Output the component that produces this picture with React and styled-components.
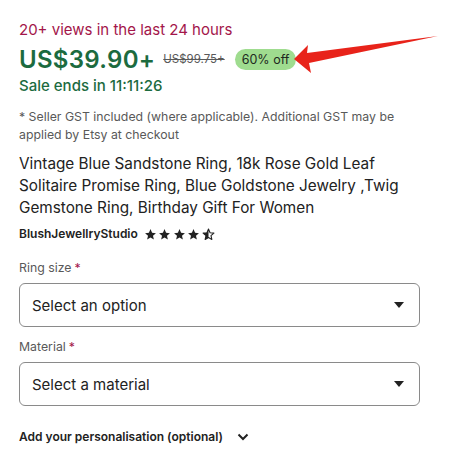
import React from "react";
import styled, { createGlobalStyle } from "styled-components";

const Global = createGlobalStyle`
  html, body { margin: 0; padding: 0; background: #fff; }
  body { font-family: Inter, "Noto Sans", Arial, sans-serif; color: #222; }
`;

const Page = styled.div`
  position: relative;
  width: 464px;
  height: 459px;
  overflow: hidden;
  padding: 18px 0 0 19px;
  box-sizing: border-box;
`;

const Column = styled.div`
  width: 401px;
  display: flex;
  flex-direction: column;
`;

const Views = styled.div`
  font-size: 15px;
  line-height: 24px;
  color: #a3164a;
`;

const PriceRow = styled.div`
  display: flex;
  align-items: center;
  height: 34px;
`;

const Price = styled.span`
  font-size: 24px;
  font-weight: 600;
  color: #1c6b3f;
  letter-spacing: 0.3px;
`;

const OldPrice = styled.span`
  font-size: 11.5px;
  color: #595959;
  text-decoration: line-through;
  margin-left: 8px;
`;

const Badge = styled.span`
  margin-left: 10px;
  background: #9fdc8f;
  color: #1e2a1e;
  font-size: 12.5px;
  border-radius: 12px;
  padding: 3px 7px;
  line-height: 15px;
`;

const Sale = styled.div`
  font-size: 15px;
  font-weight: 500;
  line-height: 20px;
  color: #1c6b3f;
`;

const Note = styled.div`
  margin-top: 12px;
  font-size: 12.3px;
  line-height: 18px;
  color: #595959;
`;

const Title = styled.h1`
  margin: 9px 0 0;
  font-size: 15.3px;
  font-weight: 400;
  line-height: 22px;
  color: #222;
`;

const Shop = styled.div`
  display: flex;
  align-items: center;
  gap: 6px;
  margin-top: 5px;
  font-size: 12px;
  font-weight: 600;
  line-height: 20px;
  color: #222;
`;

const Stars = styled.span`
  display: inline-flex;
  gap: 1.5px;
`;

const Label = styled.div`
  margin-top: ${(p) => p.$top}px;
  font-size: 12.3px;
  line-height: 18px;
  color: #595959;
  display: flex;
  gap: 3px;
`;

const Req = styled.span`
  color: #a3164a;
`;

const Select = styled.div`
  margin-top: 6px;
  height: 44px;
  box-sizing: border-box;
  border: 1px solid #8a8a8a;
  border-radius: 6px;
  display: flex;
  align-items: center;
  justify-content: space-between;
  padding: 0 15px 0 12px;
  font-size: 15px;
  color: #222;
`;

const Personal = styled.div`
  margin-top: 23px;
  display: flex;
  align-items: center;
  gap: 14px;
  font-size: 12px;
  font-weight: 600;
  color: #222;
`;

const Arrow = styled.svg`
  position: absolute;
  left: 0;
  top: 0;
  pointer-events: none;
`;

const Star = ({ half }) => (
  <svg width="13" height="13" viewBox="0 0 24 24">
    {half ? (
      <>
        <path d="M12 2l2.9 6.9 7.1.6-5.4 4.7 1.6 7-6.2-3.8-6.2 3.8 1.6-7L2 9.5l7.1-.6z" fill="none" stroke="#222" strokeWidth="2" strokeLinejoin="round" />
        <path d="M12 2L9.1 8.9 2 9.5l5.4 4.7-1.6 7L12 17.4z" fill="#222" />
      </>
    ) : (
      <path d="M12 2l2.9 6.9 7.1.6-5.4 4.7 1.6 7-6.2-3.8-6.2 3.8 1.6-7L2 9.5l7.1-.6z" fill="#222" />
    )}
  </svg>
);

const Caret = () => (
  <svg width="10" height="6" viewBox="0 0 10 6">
    <path d="M0 0h10L5 6z" fill="#222" />
  </svg>
);

const Chevron = () => (
  <svg width="12" height="8" viewBox="0 0 12 8">
    <path d="M1.5 1.5L6 6l4.5-4.5" fill="none" stroke="#222" strokeWidth="2" />
  </svg>
);

export default function App() {
  return (
    <>
      <Global />
      <Page>
        <Column>
          <Views>20+ views in the last 24 hours</Views>
          <PriceRow>
            <Price>US$39.90+</Price>
            <OldPrice>US$99.75+</OldPrice>
            <Badge>60% off</Badge>
          </PriceRow>
          <Sale>Sale ends in 11:11:26</Sale>
          <Note>
            * Seller GST included (where applicable). Additional GST may be
            <br />
            applied by Etsy at checkout
          </Note>
          <Title>
            Vintage Blue Sandstone Ring, 18k Rose Gold Leaf
            <br />
            Solitaire Promise Ring, Blue Goldstone Jewelry ,Twig
            <br />
            Gemstone Ring, Birthday Gift For Women
          </Title>
          <Shop>
            BlushJewellryStudio
            <Stars>
              <Star />
              <Star />
              <Star />
              <Star />
              <Star half />
            </Stars>
          </Shop>
          <Label $top={15}>
            Ring size<Req>*</Req>
          </Label>
          <Select>
            Select an option
            <Caret />
          </Select>
          <Label $top={11}>
            Material<Req>*</Req>
          </Label>
          <Select>
            Select a material
            <Caret />
          </Select>
          <Personal>
            Add your personalisation (optional)
            <Chevron />
          </Personal>
        </Column>
        <Arrow width="464" height="459">
          <path d="M294 59 L308 45 L307 53 L438 36 L309 63 L311 73 Z" fill="#e8231a" />
        </Arrow>
      </Page>
    </>
  );
}
